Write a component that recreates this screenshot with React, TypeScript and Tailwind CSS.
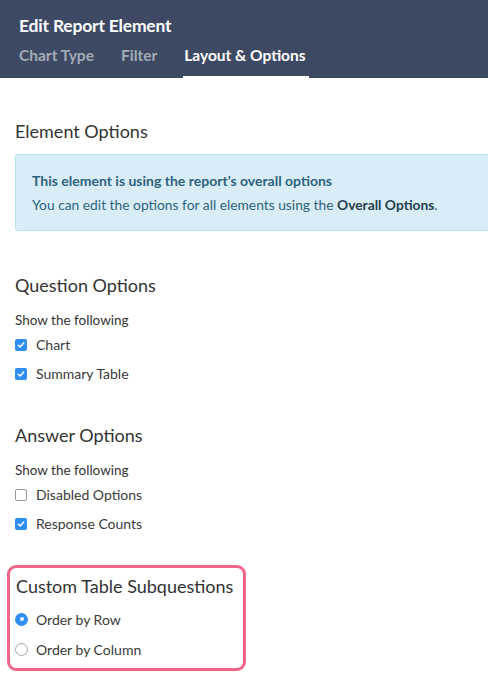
import React from "react";

function Checkbox({ checked }: { checked: boolean }) {
  if (checked) {
    return (
      <span className="flex h-[12px] w-[12px] items-center justify-center rounded-[2px] bg-[#2f8ef2]">
        <svg width="8" height="8" viewBox="0 0 8 8">
          <path d="M1.3 4.2 L3.2 6 L6.7 2" fill="none" stroke="white" strokeWidth="1.5" strokeLinecap="round" strokeLinejoin="round" />
        </svg>
      </span>
    );
  }
  return <span className="block h-[12px] w-[12px] rounded-[2px] border border-[#9a9a9a] bg-white" />;
}

function Radio({ checked }: { checked: boolean }) {
  if (checked) {
    return (
      <span className="flex h-[13px] w-[13px] items-center justify-center rounded-full bg-[#2f8ef2]">
        <span className="block h-[4px] w-[4px] rounded-full bg-white" />
      </span>
    );
  }
  return <span className="block h-[13px] w-[13px] rounded-full border border-[#a6a6a6] bg-white" />;
}

function Option({ label, checked, radio }: { label: string; checked: boolean; radio?: boolean }) {
  return (
    <div className={radio ? "-ml-[1px] flex h-[30px] items-center gap-[8px]" : "flex h-[29px] items-center gap-[9px]"}>
      {radio ? <Radio checked={checked} /> : <Checkbox checked={checked} />}
      <span className="text-[14px] text-[#3a3a3a]">{label}</span>
    </div>
  );
}

export default function App() {
  return (
    <div className="h-[675px] w-[488px] overflow-hidden bg-white" style={{ fontFamily: "Lato, 'Open Sans', sans-serif" }}>
      <div className="h-[78px] bg-[#3e4a63] px-[19px] pt-[14px]">
        <div className="text-[17.5px] font-bold leading-[24px] tracking-[-0.2px] text-white">Edit Report Element</div>
        <div className="mt-[6px] flex gap-[27px] text-[15.5px] font-bold leading-[22px]">
          <span className="text-[#a3aab8]">Chart Type</span>
          <span className="text-[#a3aab8]">Filter</span>
          <div className="flex flex-col">
            <span className="text-white">Layout &amp; Options</span>
            <span className="mt-[10px] h-[3px] w-[126px] -ml-[1px] bg-white" />
          </div>
        </div>
      </div>

      <div className="px-[15px]">
        <h2 className="mt-[42px] text-[18px] leading-[22px] text-[#333]">Element Options</h2>
        <div className="-mr-[30px] mt-[12px] rounded-[3px] border border-[#b9e4ef] bg-[#d9edf7] px-[16px] pb-[15px] pt-[16px] text-[#2f627d]">
          <div className="text-[14px] font-bold leading-[20px]">This element is using the report's overall options</div>
          <div className="mt-[4px] text-[13.8px] leading-[20px]">
            You can edit the options for all elements using the <span className="font-bold text-[#233f4e]">Overall Options</span>.
          </div>
        </div>

        <h2 className="mt-[43px] text-[18px] leading-[22px] text-[#333]">Question Options</h2>
        <div className="mt-[15px] text-[13.5px] leading-[18px] text-[#333]">Show the following</div>
        <div className="mt-[1px]">
          <Option label="Chart" checked />
          <Option label="Summary Table" checked />
        </div>

        <h2 className="mt-[36px] text-[18px] leading-[22px] text-[#333]">Answer Options</h2>
        <div className="mt-[15px] text-[13.5px] leading-[18px] text-[#333]">Show the following</div>
        <div className="mt-[1px]">
          <Option label="Disabled Options" checked={false} />
          <Option label="Response Counts" checked />
        </div>
      </div>

      <div className="ml-[7px] mt-[27px] w-[239px] rounded-[9px] border-[3px] border-[#f06688] pb-[4px] pl-[6px] pt-[7px]">
        <h2 className="text-[18px] leading-[22px] text-[#333]">Custom Table Subquestions</h2>
        <div className="mt-[7px]">
          <Option label="Order by Row" checked radio />
          <Option label="Order by Column" checked={false} radio />
        </div>
      </div>
    </div>
  );
}
